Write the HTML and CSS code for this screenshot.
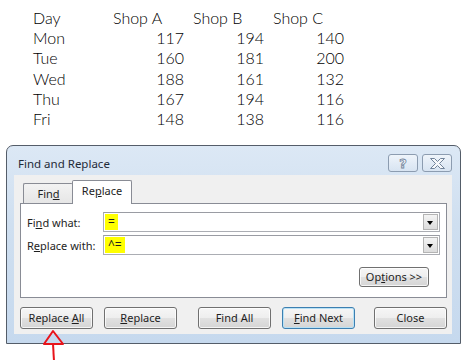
FILE: index.html
```html
<!DOCTYPE html>
<html lang="en">
<head>
  <meta charset="UTF-8">
  <title>Find and Replace</title>
  <link rel="stylesheet" href="styles.css">
</head>
<body>
  <div class="sheet">
    <div class="cell">Day</div><div class="cell">Shop A</div><div class="cell">Shop B</div><div class="cell">Shop C</div>
    <div class="cell">Mon</div><div class="cell num">117</div><div class="cell num">194</div><div class="cell num">140</div>
    <div class="cell">Tue</div><div class="cell num">160</div><div class="cell num">181</div><div class="cell num">200</div>
    <div class="cell">Wed</div><div class="cell num">188</div><div class="cell num">161</div><div class="cell num">132</div>
    <div class="cell">Thu</div><div class="cell num">167</div><div class="cell num">194</div><div class="cell num">116</div>
    <div class="cell">Fri</div><div class="cell num">148</div><div class="cell num">138</div><div class="cell num">116</div>
  </div>

  <div class="dialog">
    <div class="titlebar">
      <span class="title">Find and Replace</span>
      <div class="caption-btns">
        <span class="cap-btn help">?</span>
        <span class="cap-btn">
          <svg width="15" height="11" viewBox="0 0 15 11">
            <polygon points="0.5,0.5 4.5,0.5 7.5,3.5 10.5,0.5 14.5,0.5 9.5,5.5 14.5,10.5 10.5,10.5 7.5,7.5 4.5,10.5 0.5,10.5 5.5,5.5" fill="#f6f8fb" stroke="#71839a" stroke-width="1"/>
          </svg>
        </span>
      </div>
    </div>

    <div class="client">
      <div class="tabs">
        <div class="tab">Fin<u>d</u></div>
        <div class="tab active">Re<u>p</u>lace</div>
      </div>

      <div class="panel">
        <div class="field">
          <label>Fi<u>n</u>d what:</label>
          <div class="combo"><span class="hl">=</span><span class="drop"></span></div>
        </div>
        <div class="field">
          <label>R<u>e</u>place with:</label>
          <div class="combo"><span class="hl">^=</span><span class="drop"></span></div>
        </div>
        <div class="options-row">
          <button class="btn options">Op<u>t</u>ions &gt;&gt;</button>
        </div>
      </div>

      <div class="actions">
        <button class="btn">Replace <u>A</u>ll</button>
        <button class="btn gap-s"><u>R</u>eplace</button>
        <button class="btn gap-l">Find All</button>
        <button class="btn gap-s default"><u>F</u>ind Next</button>
        <button class="btn gap-l">Close</button>
      </div>
    </div>
  </div>

  <!-- hand drawn pointer -->
  <svg class="arrow" width="30" height="34" viewBox="0 0 30 34">
    <path d="M13 4 L4 17 L23 17 Z" fill="none" stroke="#e8141b" stroke-width="2" stroke-linejoin="round"/>
    <path d="M13 17 L14 34" fill="none" stroke="#e8141b" stroke-width="2"/>
  </svg>
</body>
</html>
```

FILE: styles.css
```css
html, body {
  min-height: 360px;
}

body {
  margin: 0;
  background: #ffffff;
  position: relative;
  font-family: "Noto Sans", "Open Sans", sans-serif;
}

.sheet {
  display: grid;
  grid-template-columns: repeat(4, 80px);
  padding: 8px 0 0 29px;
  font-family: Lato, "DejaVu Sans", sans-serif;
  font-weight: 300;
  font-size: 16px;
  line-height: 20.2px;
  color: #000;
}

.cell {
  padding: 0 4px;
}

.cell.num {
  text-align: right;
  padding-right: 5px;
}

.dialog {
  margin: 16px 0 0 6px;
  width: 455px;
  box-sizing: border-box;
  border: 1px solid #545d69;
  border-radius: 7px 7px 0 0;
  background: linear-gradient(#dce8f5, #cfdff0 40%, #c6d9ee);
  padding: 0 8px 9px 7px;
}

.titlebar {
  display: flex;
  align-items: center;
  height: 29px;
  padding-top: 5px;
  box-sizing: border-box;
}

.title {
  padding-left: 4px;
  font-size: 11.5px;
  color: #1f2a38;
}

.caption-btns {
  margin-left: auto;
  display: flex;
  gap: 4px;
}

.cap-btn {
  width: 30px;
  height: 18px;
  box-sizing: border-box;
  border: 1px solid #8c9cb0;
  border-radius: 3px;
  background: linear-gradient(rgba(255,255,255,0.55), rgba(215,226,240,0.5));
  display: flex;
  align-items: center;
  justify-content: center;
}

.cap-btn.help {
  font-family: "DejaVu Sans", sans-serif;
  font-size: 13px;
  font-weight: bold;
  color: #f6f8fb;
  -webkit-text-stroke: 0.8px #71839a;
}

.client {
  background: #f0f0f0;
  padding: 0 5px 5px 6px;
}

.tabs {
  display: flex;
  align-items: flex-end;
  height: 28px;
  padding-left: 3px;
  font-size: 11px;
  color: #1e1e1e;
}

.tab {
  width: 50px;
  height: 20px;
  box-sizing: border-box;
  border: 1px solid #898c95;
  border-bottom: none;
  border-radius: 2px 2px 0 0;
  background: linear-gradient(#f3f3f3, #e6e6e6);
  text-align: center;
  line-height: 19px;
}

.tab.active {
  width: 60px;
  height: 24px;
  margin: 0 0 -1px -1px;
  border-left: 1px solid #898c95;
  background: #ffffff;
  position: relative;
  line-height: 20px;
  z-index: 1;
}

.tab:first-child {
  border-right: none;
}

.panel {
  border: 1px solid #898c95;
  background: #ffffff;
  padding: 8px 6px 10px 6px;
  font-size: 11px;
  color: #1e1e1e;
}

.field {
  display: flex;
  align-items: center;
  height: 20px;
  margin-bottom: 3px;
}

.field label {
  width: 76px;
}

.combo {
  flex: 1;
  height: 20px;
  box-sizing: border-box;
  border: 1px solid #abadb3;
  border-top-color: #9a9ca3;
  display: flex;
  align-items: stretch;
  padding: 1px;
}

.hl {
  background: #ffff00;
  padding: 0 3px;
  line-height: 16px;
  font-size: 12px;
}

.drop {
  margin-left: auto;
  width: 15px;
  box-sizing: border-box;
  border: 1px solid #b4b4b4;
  background: linear-gradient(#f4f4f4, #dcdcdc);
  position: relative;
}

.drop::after {
  content: "";
  position: absolute;
  left: 3px;
  top: 6px;
  border-left: 3.5px solid transparent;
  border-right: 3.5px solid transparent;
  border-top: 4px solid #000;
}

.options-row {
  display: flex;
  justify-content: flex-end;
  padding: 9px 11px 0 0;
}

.btn {
  width: 73px;
  height: 22px;
  box-sizing: border-box;
  border: 1px solid #707070;
  border-radius: 3px;
  background: linear-gradient(#f6f6f6, #eeeeee 50%, #e1e1e1 50%, #d5d5d5);
  box-shadow: inset 0 0 0 1px rgba(255,255,255,0.75);
  font-family: "Noto Sans", "Open Sans", sans-serif;
  font-size: 11px;
  color: #1e1e1e;
  padding: 0;
  line-height: 18px;
}

.btn.options {
  width: 70px;
  height: 20px;
}

.btn.default {
  border-color: #3c7fb1;
  box-shadow: inset 0 0 0 1px #b8e1f5;
}

.actions {
  display: flex;
  padding-top: 9px;
}

.actions .gap-s {
  margin-left: 11px;
}

.actions .gap-l {
  margin-left: 21px;
}

.actions .btn:last-child {
  margin-left: 19px;
}

.arrow {
  position: absolute;
  left: 40px;
  top: 327px;
}
```
